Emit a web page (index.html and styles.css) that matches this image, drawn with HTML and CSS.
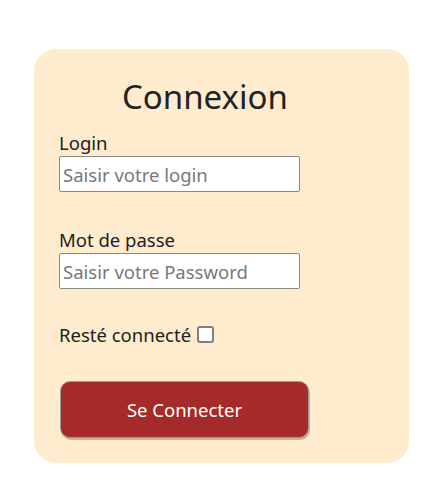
FILE: index.html
```html
<!DOCTYPE html>
<html lang="fr">
<head>
<meta charset="utf-8">
<link rel="stylesheet" href="styles.css">
</head>
<body>
<main class="page">
  <form class="card">
    <h1 class="title">Connexion</h1>
    <div class="field">
      <label class="label" for="login">Login</label>
      <input class="input" id="login" type="text" placeholder="Saisir votre login">
    </div>
    <div class="field">
      <label class="label" for="pwd">Mot de passe</label>
      <input class="input" id="pwd" type="password" placeholder="Saisir votre Password">
    </div>
    <div class="remember">
      <label for="stay">Resté connecté</label>
      <span class="check" id="stay"></span>
    </div>
    <button class="btn" type="button">Se Connecter</button>
  </form>
</main>
</body>
</html>
```

FILE: styles.css
```css
* { box-sizing: border-box; }
html, body { margin: 0; padding: 0; background: #fff; }
body {
  font-family: "Noto Sans", "Open Sans", sans-serif;
  color: #212529;
}
.page {
  padding: 49px 23px 40px 34px;
}
.card {
  width: 375px;
  height: 414px;
  background: #ffebcd;
  border-radius: 22px;
  padding: 0 25px;
  display: flex;
  flex-direction: column;
}
.title {
  margin: 27px 0 0 63px;
  font-size: 33px;
  font-weight: 400;
  line-height: 42px;
  color: #222;
}
.field {
  display: flex;
  flex-direction: column;
  align-items: flex-start;
  margin-top: 12px;
}
.field + .field { margin-top: 35px; }
.label {
  font-size: 18.5px;
  line-height: 26px;
  color: #212121;
}
.input {
  width: 241px;
  height: 36px;
  border: 1px solid #8a8a8a;
  border-radius: 2px;
  background: #fff;
  padding: 0 3px;
  font-family: inherit;
  font-size: 18.5px;
  color: #212121;
}
.input::placeholder { color: #737a80; }
.remember {
  display: flex;
  align-items: center;
  gap: 6px;
  margin-top: 33px;
  font-size: 18.5px;
  line-height: 25px;
  color: #212121;
}
.check {
  width: 17px;
  height: 17px;
  border: 2px solid #7f7f85;
  border-radius: 3px;
  background: #fff;
}
.btn {
  margin-top: 34px;
  margin-left: 1px;
  width: 249px;
  height: 57px;
  background: #a52a2a;
  color: #fff;
  border: 1px solid #9a9a9a;
  border-radius: 10px;
  box-shadow: 1px 2px 1px rgba(0,0,0,0.25);
  font-family: inherit;
  font-size: 18.5px;
}
```
